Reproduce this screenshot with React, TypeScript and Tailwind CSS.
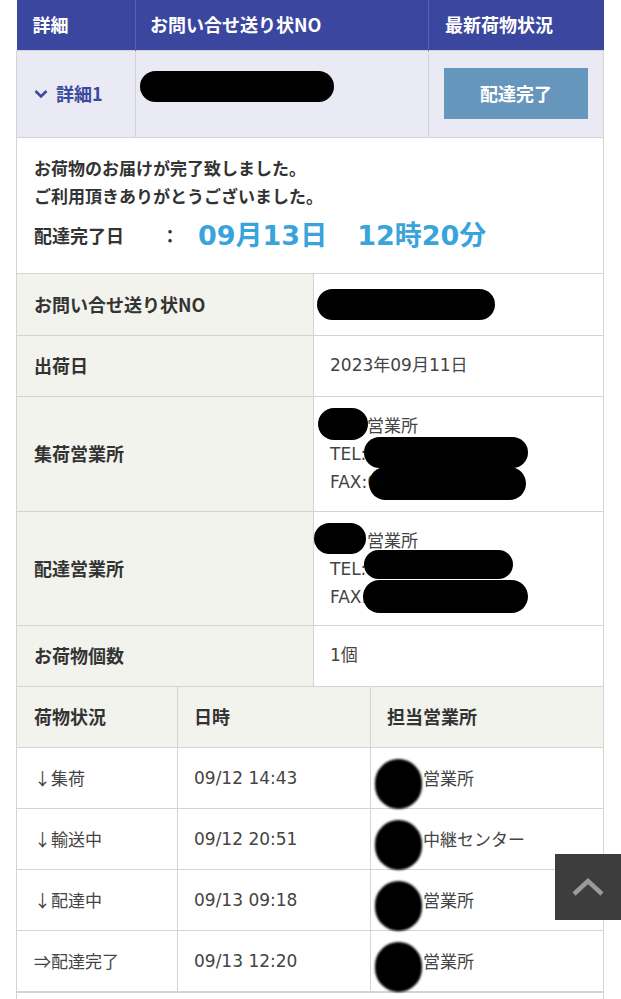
import React from "react";

const font = { fontFamily: '"Noto Sans CJK JP", "Noto Sans", sans-serif' };
// latin digits in the values run wider than Noto's
const valueFont = { fontFamily: '"DejaVu Sans", "Noto Sans CJK JP", sans-serif' };

const history = [
  { status: "↓集荷", time: "09/12 14:43", office: "営業所" },
  { status: "↓輸送中", time: "09/12 20:51", office: "中継センター" },
  { status: "↓配達中", time: "09/13 09:18", office: "営業所" },
  { status: "⇒配達完了", time: "09/13 12:20", office: "営業所" },
];

function OfficeCell({ second }: { second?: boolean }) {
  return (
    <div className="relative text-[17px] leading-[28px] text-[#444]" style={valueFont}>
      <div>
        <span className="inline-block w-[37px]" />
        <span style={font}>営業所</span>
      </div>
      <div>TEL:0</div>
      <div>FAX:0</div>
      {/* marker strokes over private data */}
      {second ? (
        <>
          <span className="absolute left-[-16px] top-[-3px] h-[31px] w-[52px] rounded-full bg-black" />
          <span className="absolute left-[34px] top-[24px] h-[29px] w-[149px] rounded-full bg-black" />
          <span className="absolute left-[33px] top-[54px] h-[33px] w-[165px] rounded-full bg-black" />
        </>
      ) : (
        <>
          <span className="absolute left-[-12px] top-[-3px] h-[32px] w-[50px] rounded-full bg-black" />
          <span className="absolute left-[34px] top-[26px] h-[31px] w-[164px] rounded-full bg-black" />
          <span className="absolute left-[39px] top-[56px] h-[33px] w-[157px] rounded-full bg-black" />
        </>
      )}
    </div>
  );
}

export default function App() {
  return (
    <div className="relative min-h-[999px] bg-white pl-4 pr-[17px] text-[#333]" style={font}>
      {/* summary */}
      <table className="w-full table-fixed border-collapse">
        <colgroup>
          <col className="w-[119px]" />
          <col className="w-[293px]" />
          <col />
        </colgroup>
        <thead>
          <tr className="h-[50px] bg-[#3b479e] text-left text-[18px] font-bold text-white">
            <th className="border-r border-[#5964b0] pl-4">詳細</th>
            <th className="border-r border-[#5964b0] pl-[14px]">お問い合せ送り状NO</th>
            <th className="pl-4">最新荷物状況</th>
          </tr>
        </thead>
        <tbody>
          <tr className="h-[87px] bg-[#e9eaf3]">
            <td className="border border-[#d4d4d4] pl-[17px]">
              <span className="flex items-center gap-[8px] text-[18px] font-bold text-[#3b4a9c]">
                <svg width="14" height="10" viewBox="0 0 14 10">
                  <path d="M1.5 2 L7 7.5 L12.5 2" fill="none" stroke="#3b4a9c" strokeWidth="2.6" />
                </svg>
                詳細1
              </span>
            </td>
            <td className="border border-[#d4d4d4] pl-[4px]">
              <div className="h-[31px] w-[194px] -translate-y-[7px] rounded-full bg-black" />
            </td>
            <td className="border border-[#d4d4d4]">
              <div className="mx-auto flex h-[51px] w-[144px] items-center justify-center bg-[#6796bd] text-[18px] font-bold text-white">
                配達完了
              </div>
            </td>
          </tr>
        </tbody>
      </table>

      {/* message */}
      <div className="border-x border-b border-[#d4d4d4] px-[17px] pt-[16px] pb-[17px]">
        <p className="text-[17px] font-bold leading-[28px]">お荷物のお届けが完了致しました。</p>
        <p className="text-[17px] font-bold leading-[28px]">ご利用頂きありがとうございました。</p>
        <div className="mt-[6px] flex items-center">
          <span className="w-[127px] text-[18px] font-bold">配達完了日</span>
          <span className="w-[37px] text-[18px] font-bold">：</span>
          <span className="text-[27px] font-bold text-[#39a3dc]" style={valueFont}>
            09月13日<span className="inline-block w-[30px]" />12時20分
          </span>
        </div>
      </div>

      {/* details */}
      <table className="w-full table-fixed border-collapse text-[18px]">
        <colgroup>
          <col className="w-[297px]" />
          <col />
        </colgroup>
        <tbody>
          <tr className="h-[61px]">
            <th className="border border-t-0 border-[#d4d4d4] bg-[#f3f3ee] pl-[17px] text-left font-bold">お問い合せ送り状NO</th>
            <td className="border border-t-0 border-[#d4d4d4] pl-[3px]">
              <div className="h-[31px] w-[178px] rounded-full bg-black" />
            </td>
          </tr>
          <tr className="h-[61px]">
            <th className="border border-[#d4d4d4] bg-[#f3f3ee] pl-[17px] text-left font-bold">出荷日</th>
            <td className="border border-[#d4d4d4] pl-4 text-[17px] text-[#444]" style={valueFont}>2023年09月11日</td>
          </tr>
          <tr className="h-[115px]">
            <th className="border border-[#d4d4d4] bg-[#f3f3ee] pl-[17px] text-left font-bold">集荷営業所</th>
            <td className="border border-[#d4d4d4] pl-4">
              <OfficeCell />
            </td>
          </tr>
          <tr className="h-[114px]">
            <th className="border border-[#d4d4d4] bg-[#f3f3ee] pl-[17px] text-left font-bold">配達営業所</th>
            <td className="border border-[#d4d4d4] pl-4">
              <OfficeCell second />
            </td>
          </tr>
          <tr className="h-[61px]">
            <th className="border border-[#d4d4d4] bg-[#f3f3ee] pl-[17px] text-left font-bold">お荷物個数</th>
            <td className="border border-[#d4d4d4] pl-4 text-[17px] text-[#444]" style={valueFont}>1個</td>
          </tr>
        </tbody>
      </table>

      {/* history */}
      <table className="w-full table-fixed border-collapse text-[17px]">
        <colgroup>
          <col className="w-[161px]" />
          <col className="w-[193px]" />
          <col />
        </colgroup>
        <thead>
          <tr className="h-[61px] bg-[#f3f3ee] text-left text-[18px] font-bold">
            <th className="border border-t-0 border-[#d4d4d4] pl-[17px]">荷物状況</th>
            <th className="border border-t-0 border-[#d4d4d4] pl-4">日時</th>
            <th className="border border-t-0 border-[#d4d4d4] pl-4">担当営業所</th>
          </tr>
        </thead>
        <tbody className="text-[#444]">
          {history.map((h) => (
            <tr key={h.time} className="h-[61px]">
              <td className="border border-[#d4d4d4] pl-[17px]">{h.status}</td>
              <td className="border border-[#d4d4d4] pl-4 pt-[2px]" style={valueFont}>{h.time}</td>
              <td className="border border-[#d4d4d4] pl-4">
                <span className="relative inline-block w-[36px]">
                  <span className="absolute left-[-12px] top-[-26px] h-[50px] w-[47px] rounded-full bg-black blur-[1px]" />
                </span>
                {h.office}
              </td>
            </tr>
          ))}
        </tbody>
      </table>
      <div className="h-[20px] border-x border-t border-[#d4d4d4]" />

      {/* back to top */}
      <div className="absolute right-0 top-[854px] flex h-[66px] w-[66px] items-center justify-center bg-[#3d3d3d]">
        <svg width="34" height="20" viewBox="0 0 34 20">
          <path d="M3 17 L17 4 L31 17" fill="none" stroke="#9a9a9a" strokeWidth="4.5" />
        </svg>
      </div>
    </div>
  );
}
